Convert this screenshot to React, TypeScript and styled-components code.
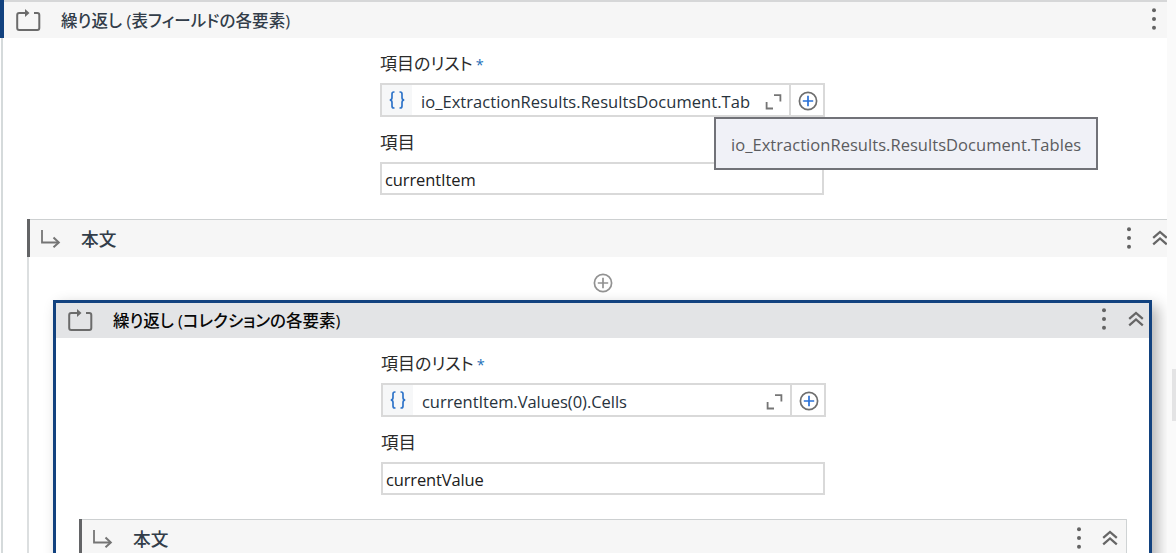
import React from "react";
import styled, { createGlobalStyle } from "styled-components";

const GlobalStyle = createGlobalStyle`
  * { box-sizing: border-box; }
  html, body { margin: 0; height: 100%; overflow: hidden; background: #fff; }
  body { font-family: "Open Sans", "Noto Sans CJK JP", sans-serif; color: #2c3338; }
  svg { display: block; flex: none; }
`;

const Page = styled.div`
  display: flex;
  height: 553px;
  overflow: hidden;
`;

const Canvas = styled.main`
  width: 1167px;
  flex: none;
  height: 100%;
`;

const ScrollGutter = styled.aside`
  flex: 1;
  height: 100%;
  background: #fafafa;
  padding: 369px 0 0 5px;
`;

const ScrollThumb = styled.div`
  height: 52px;
  background: #e4e4e5;
`;

const OuterCard = styled.section`
  height: 600px;
`;

const OuterHeader = styled.header`
  display: flex;
  align-items: center;
  height: 38px;
  padding: 3px 10px 0 12px;
  border-left: 4px solid #12427f;
  background: linear-gradient(#d6d7d8 2px, #f6f6f6 2px);
`;

const OuterBody = styled.div`
  margin-left: 1px;
  height: 562px;
  border-left: 2px solid #d5dadb;
  padding: 13px 0 0 24px;
`;

const Title = styled.h2<{ $color?: string; $size?: number; $spacing?: number }>`
  flex: 1;
  margin: 0;
  font-size: ${(p) => p.$size ?? 16.5}px;
  font-weight: 500;
  line-height: 24px;
  font-feature-settings: "palt";
  letter-spacing: ${(p) => p.$spacing ?? 0}px;
  white-space: nowrap;
  color: ${(p) => p.$color ?? "#323d49"};
`;

const BodyTitle = styled(Title)`
  font-size: 17.7px;
  padding-bottom: 2px;
`;

const IconSlot = styled.span<{ $width: number }>`
  width: ${(p) => p.$width}px;
  flex: none;
`;

const Fields = styled.div<{ $indent: number }>`
  display: flex;
  flex-direction: column;
  align-items: flex-start;
  padding-left: ${(p) => p.$indent}px;
  height: 168px;
`;

const Label = styled.label<{ $height: number; $top: number; $size: number }>`
  height: ${(p) => p.$height}px;
  padding-top: ${(p) => p.$top}px;
  font-size: ${(p) => p.$size}px;
  line-height: 24px;
  font-feature-settings: "palt";
  white-space: nowrap;
  color: #2b2b2b;
`;

const Required = styled.span`
  margin-left: 3px;
  font-size: 14.5px;
  color: #1c6fb8;
`;

const ExpressionRow = styled.div`
  display: flex;
  height: 34px;
`;

const ExpressionBox = styled.div`
  display: flex;
  align-items: center;
  width: 411px;
  border: 2px solid #d9d9d9;
  padding-right: 7px;
  background: #fff;
`;

const Braces = styled.span`
  display: flex;
  align-items: center;
  justify-content: center;
  width: 30px;
  height: 100%;
  background: #f6f7f8;
`;

const Expression = styled.span<{ $spacing: number }>`
  flex: 1;
  padding: 4px 0 0 9px;
  font-size: 16.5px;
  line-height: 24px;
  letter-spacing: ${(p) => p.$spacing}px;
  white-space: nowrap;
  color: #27323c;
`;

const ExpandSlot = styled.span`
  padding-top: 3px;
`;

const AddButton = styled.button`
  display: flex;
  align-items: center;
  justify-content: center;
  width: 34px;
  height: 34px;
  padding: 2px 0 0 2px;
  border: 2px solid #d9d9d9;
  border-left: 0;
  background: #fff;
`;

const TextBox = styled.div<{ $spacing: number }>`
  width: 444px;
  height: 33px;
  border: 2px solid #d9d9d9;
  padding: 4px 3px;
  font-size: 16.5px;
  line-height: 24px;
  letter-spacing: ${(p) => p.$spacing}px;
  white-space: nowrap;
  color: #202020;
  background: #fff;
`;

const Tooltip = styled.div`
  position: absolute;
  left: 714px;
  top: 117px;
  width: 384px;
  height: 53px;
  border: 2px solid #717278;
  padding: 14px 0 0 15px;
  background: #f0f1f7;
  font-size: 16.5px;
  line-height: 24px;
  letter-spacing: 0.04px;
  white-space: nowrap;
  color: #5b5c60;
`;

const BodyHeader = styled.header<{ $closed?: boolean }>`
  display: flex;
  align-items: center;
  height: 38px;
  padding: 3px ${(p) => (p.$closed ? 8 : 0)}px 0 11px;
  overflow: hidden;
  border-left: 3px solid #636466;
  border-right: ${(p) => (p.$closed ? "1px solid #cfd3d4" : "0")};
  background: linear-gradient(#cdd0d1 1px, #f6f6f6 1px);
`;

const BodyContent = styled.div`
  height: 400px;
  border-left: 2px solid #dcdfe0;
  padding-left: 24px;
`;

const InsertRow = styled.div`
  display: flex;
  justify-content: center;
  height: 43px;
  padding: 16px 14px 0 0;
`;

const SelectedCard = styled.section`
  width: 1099px;
  height: 400px;
  border: 3px solid #12427f;
  background: #fff;
  box-shadow: 6px 6px 14px rgba(0, 0, 0, 0.3);
`;

const SelectedHeader = styled.header`
  display: flex;
  align-items: center;
  height: 35px;
  padding: 0 5px 0 12px;
  background: #e3e4e6;
`;

const SelectedBody = styled.div`
  padding: 13px 22px 0 23px;
`;

const Actions = styled.div<{ $gap?: number; $overhang?: number }>`
  display: flex;
  align-items: center;
  gap: ${(p) => p.$gap ?? 20}px;
  margin-top: -4px;
  margin-right: ${(p) => -(p.$overhang ?? 0)}px;
`;

const LoopIcon = () => (
  <svg width="25" height="23" viewBox="0 0 25 23" fill="none" stroke="#6b6b6b" strokeWidth="2">
    <path d="M5 4H3.2Q1.2 4 1.2 6V19Q1.2 21 3.2 21H21.3Q23.3 21 23.3 19V6Q23.3 4 21.3 4H18" />
    <path d="M4 4H11" />
    <path d="M9 0L13.5 4L9 8Z" fill="#6b6b6b" stroke="none" />
  </svg>
);

const BranchIcon = () => (
  <svg width="20" height="20" viewBox="0 0 20 20" fill="none" stroke="#757575" strokeWidth="1.8">
    <path d="M1 0V12.5H17.5" />
    <path d="M12.5 7.5L17.8 12.5L12.5 17.3" strokeWidth="2" />
  </svg>
);

const DotsIcon = () => (
  <svg width="6" height="24" viewBox="0 0 6 24" fill="#636363">
    <circle cx="3" cy="3.2" r="2" />
    <circle cx="3" cy="12" r="2" />
    <circle cx="3" cy="20.8" r="2" />
  </svg>
);

const CollapseIcon = () => (
  <svg width="16" height="16" viewBox="0 0 16 16" fill="none" stroke="#666" strokeWidth="2.3">
    <path d="M1.2 7.8L8 1.9L14.8 7.8" />
    <path d="M1.2 14.3L8 8.4L14.8 14.3" />
  </svg>
);

const BracesIcon = () => (
  <svg width="18" height="18" viewBox="0 0 18 18" fill="none" stroke="#2f74c9" strokeWidth="1.7">
    <path d="M6.5 1H5.8Q4 1 4 3V6.5Q4 9 1.7 9Q4 9 4 11.5V15Q4 17 5.8 17H6.5" />
    <path d="M11.5 1H12.2Q14 1 14 3V6.5Q14 9 16.3 9Q14 9 14 11.5V15Q14 17 12.2 17H11.5" />
  </svg>
);

const ExpandIcon = () => (
  <svg width="17" height="16" viewBox="0 0 17 16" fill="none" stroke="#757575" strokeWidth="1.8">
    <path d="M9 1.2H15.4V7.5" />
    <path d="M1.6 8V14.5H8" />
  </svg>
);

const PlusIcon = ({ ring, cross }: { ring: string; cross: string }) => (
  <svg width="20" height="20" viewBox="0 0 20 20" fill="none" strokeWidth="1.7">
    <circle cx="10" cy="10" r="8.6" stroke={ring} />
    <path d="M10 4.8V15.2M4.8 10H15.2" stroke={cross} />
  </svg>
);

type LoopFieldsProps = {
  indent: number;
  expression: string;
  expressionSpacing: number;
  item: string;
  itemSpacing: number;
};

const LoopFields = ({ indent, expression, expressionSpacing, item, itemSpacing }: LoopFieldsProps) => (
  <Fields $indent={indent}>
    <Label $height={32} $top={1} $size={17}>
      項目のリスト<Required>*</Required>
    </Label>
    <ExpressionRow>
      <ExpressionBox>
        <Braces>
          <BracesIcon />
        </Braces>
        <Expression $spacing={expressionSpacing}>{expression}</Expression>
        <ExpandSlot>
          <ExpandIcon />
        </ExpandSlot>
      </ExpressionBox>
      <AddButton>
        <PlusIcon ring="#6e6e6e" cross="#2a71d8" />
      </AddButton>
    </ExpressionRow>
    <Label $height={45} $top={13} $size={17.5}>
      項目
    </Label>
    <TextBox $spacing={itemSpacing}>{item}</TextBox>
  </Fields>
);

export default function App() {
  return (
    <Page>
      <GlobalStyle />
      <Canvas>
        <OuterCard>
          <OuterHeader>
            <IconSlot $width={45}>
              <LoopIcon />
            </IconSlot>
            <Title $spacing={0.1}>繰り返し (表フィールドの各要素)</Title>
            <Actions>
              <DotsIcon />
            </Actions>
          </OuterHeader>
          <OuterBody>
            <LoopFields
              indent={353}
              expression="io_ExtractionResults.ResultsDocument.Tab"
              expressionSpacing={0.05}
              item="currentItem"
              itemSpacing={-0.1}
            />
            <BodyHeader>
              <IconSlot $width={40}>
                <BranchIcon />
              </IconSlot>
              <BodyTitle>本文</BodyTitle>
              <Actions $overhang={1}>
                <DotsIcon />
                <CollapseIcon />
              </Actions>
            </BodyHeader>
            <BodyContent>
              <InsertRow>
                <PlusIcon ring="#929292" cross="#929292" />
              </InsertRow>
              <SelectedCard>
                <SelectedHeader>
                  <IconSlot $width={45}>
                    <LoopIcon />
                  </IconSlot>
                  <Title $color="#080808">繰り返し (コレクションの各要素)</Title>
                  <Actions $gap={21}>
                    <DotsIcon />
                    <CollapseIcon />
                  </Actions>
                </SelectedHeader>
                <SelectedBody>
                  <LoopFields
                    indent={302}
                    expression="currentItem.Values(0).Cells"
                    expressionSpacing={-0.04}
                    item="currentValue"
                    itemSpacing={-0.15}
                  />
                  <BodyHeader $closed>
                    <IconSlot $width={40}>
                      <BranchIcon />
                    </IconSlot>
                    <BodyTitle>本文</BodyTitle>
                    <Actions>
                      <DotsIcon />
                      <CollapseIcon />
                    </Actions>
                  </BodyHeader>
                </SelectedBody>
              </SelectedCard>
            </BodyContent>
          </OuterBody>
        </OuterCard>
      </Canvas>
      <ScrollGutter>
        <ScrollThumb />
      </ScrollGutter>
      <Tooltip>io_ExtractionResults.ResultsDocument.Tables</Tooltip>
    </Page>
  );
}
